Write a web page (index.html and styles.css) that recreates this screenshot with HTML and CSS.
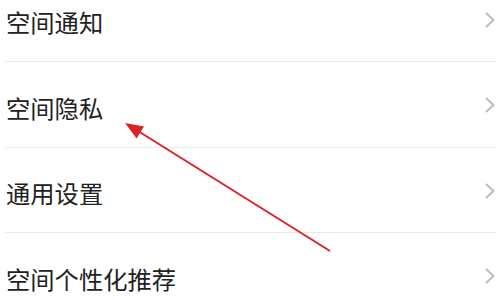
FILE: index.html
```html
<!DOCTYPE html>
<html lang="zh-CN">
<head>
<meta charset="utf-8">
<link rel="stylesheet" href="styles.css">
</head>
<body>
<div class="page">
  <ul class="menu">
    <li class="row"><span class="label">空间通知</span><svg class="chev" viewBox="0 0 10 16"><path d="M1.5 1.5 L8.5 8 L1.5 14.5"/></svg></li>
    <li class="row"><span class="label">空间隐私</span><svg class="chev" viewBox="0 0 10 16"><path d="M1.5 1.5 L8.5 8 L1.5 14.5"/></svg></li>
    <li class="row"><span class="label">通用设置</span><svg class="chev" viewBox="0 0 10 16"><path d="M1.5 1.5 L8.5 8 L1.5 14.5"/></svg></li>
    <li class="row"><span class="label">空间个性化推荐</span><svg class="chev" viewBox="0 0 10 16"><path d="M1.5 1.5 L8.5 8 L1.5 14.5"/></svg></li>
  </ul>
  <svg class="arrow" viewBox="0 0 500 300" width="500" height="300">
    <line x1="330" y1="251" x2="138" y2="131" />
    <polygon points="125,123 144,126.6 136.6,138.4" />
  </svg>
</div>
</body>
</html>
```

FILE: styles.css
```css
html, body {
  margin: 0;
  padding: 0;
  background: #ffffff;
}
.page {
  position: relative;
  width: 500px;
  height: 300px;
  overflow: hidden;
  font-family: "Noto Sans CJK SC", "Noto Sans", sans-serif;
}
.menu {
  list-style: none;
  margin: -23.5px 0 0 0;
  padding: 0;
}
.row {
  box-sizing: border-box;
  height: 85.5px;
  margin: 0 3px 0 5px;
  padding: 7px 2px 0 1px;
  border-bottom: 1px solid #ebebeb;
  display: flex;
  align-items: center;
  justify-content: space-between;
}
.label {
  font-size: 24.3px;
  line-height: 1;
  color: #222222;
  letter-spacing: 0;
}
.chev {
  width: 10px;
  height: 16px;
  margin-top: -5px;
  fill: none;
  stroke: #bbbbbb;
  stroke-width: 1.9;
  stroke-linecap: round;
  stroke-linejoin: round;
}
.arrow {
  position: absolute;
  left: 0;
  top: 0;
  pointer-events: none;
}
.arrow line {
  stroke: #dd2227;
  stroke-width: 2;
}
.arrow polygon {
  fill: #dd2227;
}
```
